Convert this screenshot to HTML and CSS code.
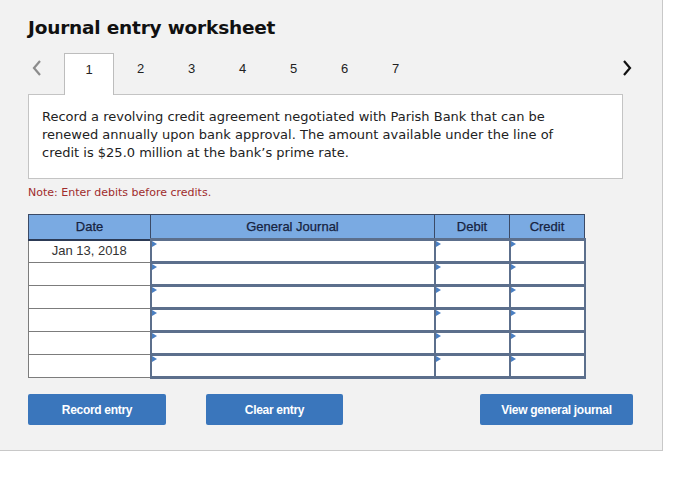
FILE: index.html
```html
<!DOCTYPE html>
<html>
<head>
<meta charset="utf-8">
<link rel="stylesheet" href="styles.css">
</head>
<body>
<div class="panel">
  <h1 class="title">Journal entry worksheet</h1>
  <div class="tabs">
    <span class="arrow arrow-left"><svg width="12" height="16" viewBox="0 0 12 16"><polyline points="9,1 3,8 9,15" fill="none" stroke="#8c8c8c" stroke-width="2.2"/></svg></span>
    <span class="tab active">1</span>
    <span class="tab">2</span>
    <span class="tab">3</span>
    <span class="tab">4</span>
    <span class="tab">5</span>
    <span class="tab">6</span>
    <span class="tab">7</span>
    <span class="arrow arrow-right"><svg width="12" height="16" viewBox="0 0 12 16"><polyline points="3,1 9,8 3,15" fill="none" stroke="#111" stroke-width="2.2"/></svg></span>
  </div>
  <div class="desc">Record a revolving credit agreement negotiated with Parish Bank that can be renewed annually upon bank approval. The amount available under the line of credit is $25.0 million at the bank’s prime rate.</div>
  <div class="note">Note: Enter debits before credits.</div>
  <table class="journal">
    <thead>
      <tr><th class="c-date">Date</th><th class="c-gj">General Journal</th><th class="c-num">Debit</th><th class="c-num">Credit</th></tr>
    </thead>
    <tbody>
      <tr><td class="date">Jan 13, 2018</td><td class="inp"><i class="tri"></i></td><td class="inp"><i class="tri"></i></td><td class="inp"><i class="tri"></i></td></tr>
      <tr><td class="date"></td><td class="inp"><i class="tri"></i></td><td class="inp"><i class="tri"></i></td><td class="inp"><i class="tri"></i></td></tr>
      <tr><td class="date"></td><td class="inp"><i class="tri"></i></td><td class="inp"><i class="tri"></i></td><td class="inp"><i class="tri"></i></td></tr>
      <tr><td class="date"></td><td class="inp"><i class="tri"></i></td><td class="inp"><i class="tri"></i></td><td class="inp"><i class="tri"></i></td></tr>
      <tr><td class="date"></td><td class="inp"><i class="tri"></i></td><td class="inp"><i class="tri"></i></td><td class="inp"><i class="tri"></i></td></tr>
      <tr><td class="date"></td><td class="inp"><i class="tri"></i></td><td class="inp"><i class="tri"></i></td><td class="inp"><i class="tri"></i></td></tr>
    </tbody>
  </table>
  <div class="buttons">
    <button class="btn btn-record">Record entry</button>
    <button class="btn btn-clear">Clear entry</button>
    <button class="btn btn-view">View general journal</button>
  </div>
</div>
</body>
</html>
```
FILE: styles.css
```css
html, body {
  margin: 0;
  padding: 0;
  background: #ffffff;
}
.panel {
  width: 663px;
  height: 451px;
  box-sizing: border-box;
  background: #f2f2f2;
  border-right: 1px solid #c8c8c8;
  border-bottom: 1px solid #c8c8c8;
  padding: 14px 0 0 28px;
  font-family: "Liberation Sans", Arial, sans-serif;
}
.title {
  margin: 0;
  font-family: "DejaVu Sans", Verdana, sans-serif;
  font-weight: bold;
  font-size: 18.5px;
  line-height: 28px;
  color: #111;
  letter-spacing: -0.2px;
}
.tabs {
  margin-top: 11px;
  display: flex;
  align-items: stretch;
  height: 41px;
  width: 605px;
  position: relative;
  z-index: 2;
}
.arrow {
  display: flex;
  align-items: flex-start;
  padding-top: 7px;
}
.arrow-left {
  width: 36px;
  padding-left: 3px;
  box-sizing: border-box;
}
.arrow-right {
  margin-left: auto;
}
.tab {
  width: 51px;
  text-align: center;
  font-size: 13px;
  line-height: 32px;
  color: #222;
  box-sizing: border-box;
}
.tab.active {
  width: 50px;
  background: #fff;
  border: 1px solid #bdbdbd;
  border-bottom: none;
  height: 42px;
  margin-right: 1px;
}
.desc {
  width: 595px;
  box-sizing: border-box;
  background: #fff;
  border: 1px solid #c4c4c4;
  padding: 13px 50px 16px 13px;
  font-family: "DejaVu Sans", Verdana, sans-serif;
  font-size: 13px;
  line-height: 18px;
  color: #222;
}
.note {
  margin-top: 6px;
  font-family: "DejaVu Sans", Verdana, sans-serif;
  font-size: 11px;
  line-height: 16px;
  color: #a02c2c;
}
.journal {
  margin-top: 13px;
  border-collapse: collapse;
  width: 553px;
  table-layout: fixed;
}
.journal th {
  background: #7aaae2;
  color: #17233f;
  font-weight: normal;
  font-size: 13px;
  height: 23px;
  padding: 0;
  border: 1px solid #3b4a66;
  border-bottom: 2px solid #2c3a55;
  -webkit-text-stroke: 0.25px #17233f;
}
.c-date { width: 121px; }
.c-gj { width: 283px; }
.c-num { width: 74px; }
.journal td {
  padding: 0;
  height: 20px;
  background: #fff;
}
.journal td.date {
  border: 1px solid #7c7c7c;
  text-align: center;
  font-size: 13px;
  color: #333;
  vertical-align: top;
  line-height: 19px;
}
.journal td.inp {
  border-style: solid;
  border-color: #5c6f8c;
  border-width: 3px 2px;
  position: relative;
  vertical-align: top;
}
.tri {
  position: absolute;
  left: 0;
  top: 0;
  width: 0;
  height: 0;
  border-top: 3px solid transparent;
  border-bottom: 3px solid transparent;
  border-left: 5px solid #4a7fc2;
}
.buttons {
  display: flex;
  width: 605px;
  margin-top: 15px;
}
.btn {
  height: 31px;
  background: #3a76bc;
  color: #fff;
  border: none;
  border-radius: 2px;
  font-family: "Liberation Sans", Arial, sans-serif;
  font-weight: bold;
  font-size: 12px;
  letter-spacing: -0.3px;
  padding: 0;
}
.btn-record { width: 138px; }
.btn-clear { width: 137px; margin-left: 40px; }
.btn-view { width: 153px; margin-left: auto; }
```
